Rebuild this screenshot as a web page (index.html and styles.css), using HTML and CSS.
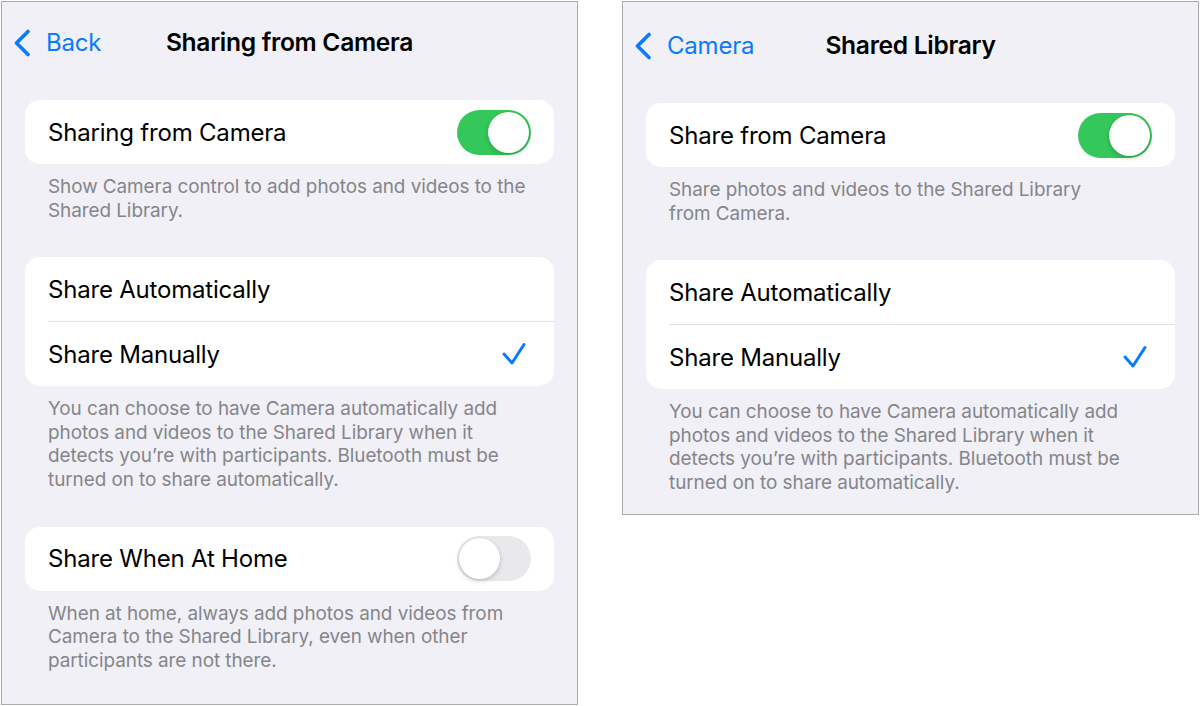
FILE: index.html
```html
<!DOCTYPE html>
<html lang="en">
<head>
<meta charset="utf-8">
<title>Sharing from Camera</title>
<link rel="stylesheet" href="styles.css">
</head>
<body>
<div class="page">
  <section class="panel panel-left">
    <header class="nav">
      <a class="back">
        <svg class="chev" viewBox="0 0 18 28" width="18" height="28"><polyline points="15,2.5 3.5,14 15,25.5" fill="none" stroke="#0a7aff" stroke-width="3.6" stroke-linecap="round" stroke-linejoin="round"/></svg>
        <span>Back</span>
      </a>
      <h1 class="title">Sharing from Camera</h1>
    </header>

    <div class="card">
      <div class="row">
        <span class="label">Sharing from Camera</span>
        <span class="toggle on"><span class="knob"></span></span>
      </div>
    </div>
    <p class="footer">Show Camera control to add photos and videos to the Shared Library.</p>

    <div class="card">
      <div class="row">
        <span class="label">Share Automatically</span>
      </div>
      <div class="sep"></div>
      <div class="row">
        <span class="label">Share Manually</span>
        <svg class="check" viewBox="0 0 24 24" width="24" height="24"><polyline points="2,12 10,21 22,2.5" fill="none" stroke="#0a7aff" stroke-width="3" stroke-linecap="round" stroke-linejoin="round"/></svg>
      </div>
    </div>
    <p class="footer">You can choose to have Camera automatically add photos and videos to the Shared Library when it detects you’re with participants. Bluetooth must be turned on to share automatically.</p>

    <div class="card">
      <div class="row">
        <span class="label">Share When At Home</span>
        <span class="toggle off"><span class="knob"></span></span>
      </div>
    </div>
    <p class="footer">When at home, always add photos and videos from Camera to the Shared Library, even when other participants are not there.</p>
  </section>

  <section class="panel panel-right">
    <header class="nav">
      <a class="back">
        <svg class="chev" viewBox="0 0 18 28" width="18" height="28"><polyline points="15,2.5 3.5,14 15,25.5" fill="none" stroke="#0a7aff" stroke-width="3.6" stroke-linecap="round" stroke-linejoin="round"/></svg>
        <span>Camera</span>
      </a>
      <h1 class="title">Shared Library</h1>
    </header>

    <div class="card">
      <div class="row">
        <span class="label">Share from Camera</span>
        <span class="toggle on"><span class="knob"></span></span>
      </div>
    </div>
    <p class="footer">Share photos and videos to the Shared Library<br>from Camera.</p>

    <div class="card">
      <div class="row">
        <span class="label">Share Automatically</span>
      </div>
      <div class="sep"></div>
      <div class="row">
        <span class="label">Share Manually</span>
        <svg class="check" viewBox="0 0 24 24" width="24" height="24"><polyline points="2,12 10,21 22,2.5" fill="none" stroke="#0a7aff" stroke-width="3" stroke-linecap="round" stroke-linejoin="round"/></svg>
      </div>
    </div>
    <p class="footer">You can choose to have Camera automatically add photos and videos to the Shared Library when it detects you’re with participants. Bluetooth must be turned on to share automatically.</p>
  </section>
</div>
</body>
</html>
```
FILE: styles.css
```css
* { box-sizing: border-box; }

html, body {
  margin: 0;
  padding: 0;
  background: #ffffff;
}

body {
  font-family: Inter, "Noto Sans", "Liberation Sans", sans-serif;
  color: #000;
  -webkit-font-smoothing: antialiased;
}

.page {
  display: flex;
  align-items: flex-start;
  gap: 44px;
  padding: 1px 0 0 1px;
}

.panel {
  width: 577px;
  background: #f0f0f6;
  border: 1px solid #ababab;
  overflow: hidden;
}

.panel-left { height: 704px; }
.panel-right { height: 514px; padding-top: 3px; }

.nav {
  position: relative;
  height: 80px;
  display: flex;
  align-items: center;
  justify-content: center;
  margin-bottom: 18px;
}

.back {
  position: absolute;
  left: 11px;
  top: 0;
  bottom: 0;
  display: flex;
  align-items: center;
  color: #0a7aff;
  font-size: 24px;
  letter-spacing: -0.2px;
}

.back .chev {
  margin-right: 15px;
  margin-top: 1px;
}

.title {
  margin: 0;
  font-size: 24.6px;
  font-weight: 600;
  letter-spacing: -0.3px;
}

.card {
  margin: 0 23px;
  background: #ffffff;
  border-radius: 15px;
  overflow: hidden;
}

.row {
  height: 64px;
  display: flex;
  align-items: center;
  justify-content: space-between;
  padding: 0 23px;
}

.label {
  font-size: 24px;
  letter-spacing: -0.2px;
}

.sep {
  height: 1px;
  margin-left: 23px;
  background: #e2e2e5;
}

.check {
  margin-right: 5px;
}

.footer {
  margin: 0 45px 0 46px;
  padding: 11px 0 35px;
  font-size: 18.9px;
  line-height: 23.6px;
  color: #85858a;
  letter-spacing: -0.05px;
}

.toggle {
  position: relative;
  width: 74px;
  height: 45px;
  border-radius: 23px;
  flex: none;
}

.toggle.on { background: #34c759; }
.toggle.off { background: #e9e9eb; }

.knob {
  position: absolute;
  top: 2px;
  width: 41px;
  height: 41px;
  border-radius: 50%;
  background: #fff;
  box-shadow: 0 2px 5px rgba(0, 0, 0, 0.18), 0 0 0 0.5px rgba(0, 0, 0, 0.06);
}

.toggle.on .knob { right: 2px; }
.toggle.off .knob { left: 2px; }
```
